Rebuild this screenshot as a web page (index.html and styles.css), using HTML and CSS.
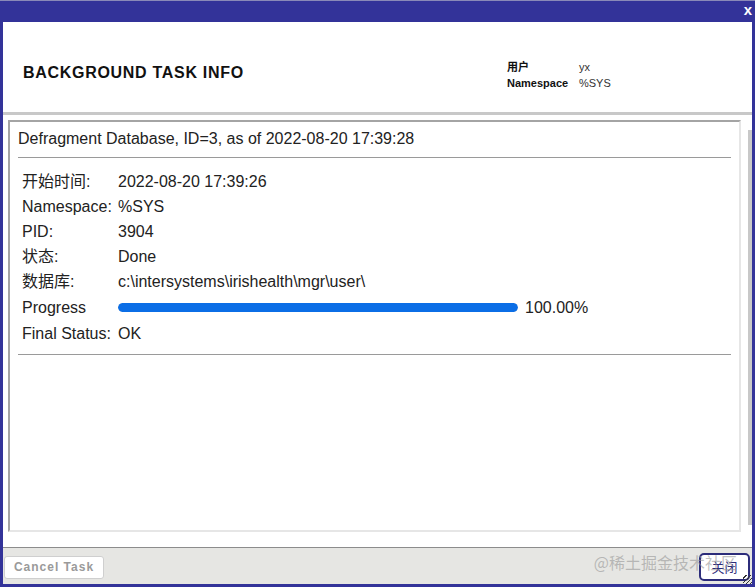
FILE: index.html
```html
<!DOCTYPE HTML>
<html>

<head>
    <title>Background Task Info</title>
    <meta name="viewport" content="width=device-width, initial-scale=1">
    <link rel="stylesheet" href="styles.css">
</head>

<body>
    <div class="dialog">
        <div class="titlebar">
            <span class="close-x">x</span>
        </div>

        <div class="dialog-body">
            <!-- page header -->
            <div class="header">
                <h1>BACKGROUND TASK INFO</h1>
                <table class="userinfo">
                    <tr><th>用户</th><td>yx</td></tr>
                    <tr><th>Namespace</th><td>%SYS</td></tr>
                </table>
            </div>
            <div class="header-line"></div>

            <div class="main">
                <div class="taskbox">
                    <div class="task-title">Defragment Database, ID=3, as of 2022-08-20 17:39:28</div>
                    <hr class="rule">
                    <table class="details">
                        <tr><td class="lbl">开始时间:</td><td>2022-08-20 17:39:26</td></tr>
                        <tr><td class="lbl">Namespace:</td><td>%SYS</td></tr>
                        <tr><td class="lbl">PID:</td><td>3904</td></tr>
                        <tr><td class="lbl">状态:</td><td>Done</td></tr>
                        <tr><td class="lbl">数据库:</td><td>c:\intersystems\irishealth\mgr\user\</td></tr>
                        <tr class="row-progress">
                            <td class="lbl">Progress</td>
                            <td>
                                <div class="progress-wrap">
                                    <div class="progress"><div class="progress-fill" style="width: 100%;"></div></div>
                                    <span>100.00%</span>
                                </div>
                            </td>
                        </tr>
                        <tr><td class="lbl">Final Status:</td><td>OK</td></tr>
                    </table>
                    <hr class="rule">
                </div>
                <div class="scroll-strip"></div>
            </div>

            <div class="footer">
                <button class="btn-cancel">Cancel Task</button>
                <button class="btn-close">关闭</button>
                <span class="watermark">@稀土掘金技术社区</span>
                <span class="grip"></span>
            </div>
        </div>
    </div>
</body>

</html>
```

FILE: styles.css
```css
html, body {
    margin: 0;
    padding: 0;
    height: 100%;
    font-family: "Liberation Sans", Arial, "Noto Sans CJK SC", sans-serif;
    color: #222;
}

.dialog {
    box-sizing: border-box;
    height: 587px;
    width: 755px;
    display: flex;
    flex-direction: column;
    border: 3px solid #333399;
    border-top: none;
    background-color: #fff;
}

.titlebar {
    height: 22px;
    background-color: #333399;
    border-top: 1px solid #8a8ab8;
    box-sizing: border-box;
    display: flex;
    justify-content: flex-end;
    align-items: center;
    margin: 0 -3px;
}

.close-x {
    color: #fff;
    font-weight: bold;
    font-size: 15px;
    padding-right: 3px;
    line-height: 14px;
    margin-top: -3px;
}

.dialog-body {
    flex: 1;
    display: flex;
    flex-direction: column;
    position: relative;
}

.header {
    height: 90px;
    display: flex;
    align-items: center;
    padding-left: 20px;
}

.header h1 {
    font-size: 16px;
    font-weight: bold;
    margin: 0;
    margin-top: 12px;
    letter-spacing: 0.7px;
    color: #111;
    width: 484px;
}

.userinfo {
    border-collapse: collapse;
    font-size: 11px;
    margin-top: 15px;
}

.userinfo th {
    text-align: left;
    font-weight: bold;
    padding: 0 4px 0 0;
    width: 68px;
    line-height: 16px;
    color: #111;
}

.userinfo td {
    padding: 0;
    line-height: 16px;
    color: #333;
}

.header-line {
    height: 3px;
    background-color: #c8c8c8;
}

.main {
    flex: 1;
    display: flex;
    padding: 5px 0 0 5px;
}

.taskbox {
    box-sizing: border-box;
    width: 734px;
    height: 412px;
    border: 2px solid #e6e6e6;
    border-top-color: #a4a4a4;
    border-left-color: #a4a4a4;
    padding: 7px 8px 0 8px;
}

.task-title {
    font-size: 16px;
    line-height: 20px;
}

.rule {
    border: none;
    border-top: 1px solid #9a9a9a;
    margin: 8px 0 0 0;
}

.details {
    border-collapse: collapse;
    margin: 11px 0 7px 2px;
    font-size: 16px;
}

.details td {
    padding: 2px 2px;
    line-height: 21px;
    white-space: nowrap;
}

.details td.lbl {
    width: 92px;
}

.row-progress td {
    padding-top: 3px;
    padding-bottom: 3px;
}

.progress-wrap {
    display: flex;
    align-items: center;
    gap: 7px;
}

.progress {
    width: 400px;
    height: 9px;
    border-radius: 5px;
    background-color: #e0e0e0;
    overflow: hidden;
}

.progress-fill {
    height: 100%;
    background-color: #0b6ee6;
    border-radius: 5px;
}

.scroll-strip {
    width: 4px;
    height: 395px;
    margin: 10px 0 0 7px;
    background-color: #c8c8c8;
}

.footer {
    height: 36px;
    background-color: #e6e6e3;
    border-top: 1px solid #8c8c8c;
    display: flex;
    align-items: center;
    justify-content: space-between;
    padding: 0 2px 0 1px;
    position: relative;
}

.btn-cancel {
    height: 23px;
    width: 100px;
    background-color: #fff;
    border: 1px solid #cfcfcf;
    border-radius: 3px;
    color: #9a9a9a;
    font-family: "Liberation Sans", Arial, sans-serif;
    font-weight: bold;
    font-size: 12px;
    letter-spacing: 1px;
    padding: 0;
    margin-top: 2px;
}

.btn-close {
    height: 28px;
    width: 51px;
    background-color: #fff;
    border: 2px solid #2c2c7a;
    border-radius: 5px;
    color: #2c2c7a;
    font-family: "Noto Sans CJK SC", sans-serif;
    font-size: 13px;
    padding: 0;
    margin-top: 1px;
}

.watermark {
    position: absolute;
    right: 15px;
    top: 2px;
    font-family: "Noto Sans CJK SC", sans-serif;
    font-size: 16px;
    color: rgba(150, 150, 150, 0.6);
    pointer-events: none;
}

.grip {
    position: absolute;
    right: 0;
    bottom: 0;
    width: 9px;
    height: 9px;
    background: repeating-linear-gradient(135deg, transparent 0 2px, #333 2px 3px);
}
```
